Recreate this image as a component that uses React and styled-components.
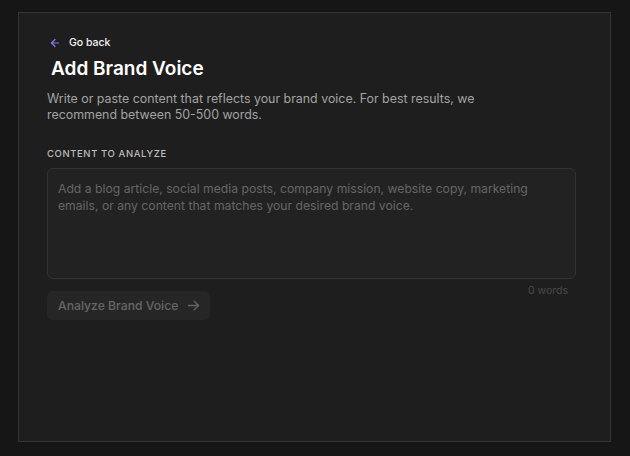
import { useState } from "react";
import styled, { createGlobalStyle } from "styled-components";

const GlobalStyle = createGlobalStyle`
  html, body {
    margin: 0;
    padding: 0;
    background: #161616;
    font-family: Inter, "Noto Sans", sans-serif;
  }
  * { box-sizing: border-box; }
`;

export default function App() {
  const [text, setText] = useState("");
  const words = text.trim() ? text.trim().split(/\s+/).length : 0;

  return (
    <>
      <GlobalStyle />
      <Page>
        <Panel>
          <BackLink href="#">
            <svg width="12" height="12" viewBox="0 0 24 24" fill="none" stroke="#8b7cf0" strokeWidth="2.4" strokeLinecap="round" strokeLinejoin="round">
              <path d="M19 12H5" />
              <path d="M12 19l-7-7 7-7" />
            </svg>
            Go back
          </BackLink>
          <Title>Add Brand Voice</Title>
          <Description>
            Write or paste content that reflects your brand voice. For best results, we
            recommend between 50-500 words.
          </Description>
          <Label>Content to analyze</Label>
          <TextArea
            value={text}
            onChange={(e) => setText(e.target.value)}
            placeholder="Add a blog article, social media posts, company mission, website copy, marketing emails, or any content that matches your desired brand voice."
          />
          <Counter>{words} words</Counter>
          <AnalyzeButton disabled={words === 0}>
            Analyze Brand Voice
            <svg width="15" height="15" viewBox="0 0 24 24" fill="none" stroke="currentColor" strokeWidth="2.2" strokeLinecap="round" strokeLinejoin="round">
              <path d="M4 12h16" />
              <path d="M13 5l7 7-7 7" />
            </svg>
          </AnalyzeButton>
        </Panel>
      </Page>
    </>
  );
}

const Page = styled.div`
  width: 630px;
  height: 456px;
  padding: 12px 19px 14px 18px;
`;

const Panel = styled.div`
  height: 430px;
  background: #1e1e1e;
  border: 1px solid #343434;
  padding: 22px 34px 0 28px;
  display: flex;
  flex-direction: column;
`;

const BackLink = styled.a`
  display: flex;
  align-items: center;
  gap: 8px;
  color: #f2f2f2;
  font-size: 10.5px;
  font-weight: 500;
  text-decoration: none;
  padding-left: 2px;
  line-height: 16px;
`;

const Title = styled.h1`
  margin: 6px 0 0 4px;
  font-size: 19px;
  font-weight: 600;
  color: #ffffff;
  line-height: 24px;
`;

const Description = styled.p`
  margin: 10px 0 0;
  max-width: 440px;
  font-size: 12.4px;
  line-height: 16px;
  color: #a3a3a3;
`;

const Label = styled.div`
  margin-top: 24px;
  font-size: 9.5px;
  font-weight: 500;
  letter-spacing: 0.6px;
  text-transform: uppercase;
  color: #bdbdbd;
  line-height: 14px;
`;

const TextArea = styled.textarea`
  margin-top: 7px;
  height: 111px;
  width: 100%;
  resize: none;
  background: #222222;
  border: 1px solid #333333;
  border-radius: 6px;
  padding: 11px 10px;
  font-family: inherit;
  font-size: 12.2px;
  line-height: 17px;
  color: #dddddd;
  outline: none;
  &::placeholder {
    color: #666666;
  }
`;

const Counter = styled.div`
  align-self: flex-end;
  margin: 5px 8px 0 0;
  font-size: 10.5px;
  line-height: 14px;
  color: #4a4a4a;
`;

const AnalyzeButton = styled.button`
  margin-top: -7px;
  align-self: flex-start;
  display: flex;
  align-items: center;
  gap: 8px;
  height: 29px;
  padding: 0 9px 0 11px;
  background: #262626;
  border: none;
  border-radius: 6px;
  font-family: inherit;
  font-size: 12.2px;
  font-weight: 500;
  color: #666666;
  cursor: default;
`;
